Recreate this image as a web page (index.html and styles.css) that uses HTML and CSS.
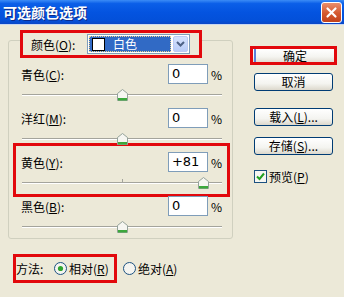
FILE: index.html
```html
<!DOCTYPE html>
<html lang="zh-CN">
<head>
    <meta charset="UTF-8" />
    <title>可选颜色选项</title>
    <link rel="stylesheet" href="styles.css">
</head>
<body>
    <div class="dialog">
        <div class="titlebar">
            <span class="title">可选颜色选项</span>
            <div class="close-btn">
                <svg width="13" height="13" viewBox="0 0 13 13"><path d="M2.5 2.5 L10.5 10.5 M10.5 2.5 L2.5 10.5" stroke="#fff" stroke-width="2.2" stroke-linecap="round"/></svg>
            </div>
        </div>

        <div class="content">
            <div class="left">
                <div class="group">
                    <div class="legend mark">
                        <span class="legend-label">颜色(<u>O</u>):</span>
                        <div class="combo">
                            <div class="combo-value">
                                <span class="swatch"></span>
                                <span>白色</span>
                            </div>
                            <div class="combo-arrow">
                                <svg width="9" height="6" viewBox="0 0 9 6"><path d="M1 1 L4.5 4.5 L8 1" fill="none" stroke="#4d6185" stroke-width="2"/></svg>
                            </div>
                        </div>
                    </div>

                    <div class="row">
                        <div class="line">
                            <span class="row-label">青色(<u>C</u>):</span>
                            <div class="field">0</div>
                            <span class="pct">%</span>
                        </div>
                        <div class="slider">
                            <div class="track"></div>
                            <div class="tick"></div>
                            <svg class="thumb" style="left: 50%;" width="11" height="12" viewBox="0 0 11 12"><path d="M0.5 4.5 L5.5 0.5 L10.5 4.5 V11.5 H0.5 Z" fill="#f6f6f1" stroke="#94a29a"/><rect x="1" y="9" width="9" height="2.5" fill="#3ca83c"/></svg>
                        </div>
                    </div>

                    <div class="row">
                        <div class="line">
                            <span class="row-label">洋红(<u>M</u>):</span>
                            <div class="field">0</div>
                            <span class="pct">%</span>
                        </div>
                        <div class="slider">
                            <div class="track"></div>
                            <div class="tick"></div>
                            <svg class="thumb" style="left: 50%;" width="11" height="12" viewBox="0 0 11 12"><path d="M0.5 4.5 L5.5 0.5 L10.5 4.5 V11.5 H0.5 Z" fill="#f6f6f1" stroke="#94a29a"/><rect x="1" y="9" width="9" height="2.5" fill="#3ca83c"/></svg>
                        </div>
                    </div>

                    <!-- highlighted row -->
                    <div class="row mark">
                        <div class="line">
                            <span class="row-label">黄色(<u>Y</u>):</span>
                            <div class="field">+81</div>
                            <span class="pct">%</span>
                        </div>
                        <div class="slider">
                            <div class="track"></div>
                            <div class="tick"></div>
                            <svg class="thumb" style="left: 90.5%;" width="11" height="12" viewBox="0 0 11 12"><path d="M0.5 4.5 L5.5 0.5 L10.5 4.5 V11.5 H0.5 Z" fill="#f6f6f1" stroke="#94a29a"/><rect x="1" y="9" width="9" height="2.5" fill="#3ca83c"/></svg>
                        </div>
                    </div>

                    <div class="row">
                        <div class="line">
                            <span class="row-label">黑色(<u>B</u>):</span>
                            <div class="field">0</div>
                            <span class="pct">%</span>
                        </div>
                        <div class="slider">
                            <div class="track"></div>
                            <div class="tick"></div>
                            <svg class="thumb" style="left: 50%;" width="11" height="12" viewBox="0 0 11 12"><path d="M0.5 4.5 L5.5 0.5 L10.5 4.5 V11.5 H0.5 Z" fill="#f6f6f1" stroke="#94a29a"/><rect x="1" y="9" width="9" height="2.5" fill="#3ca83c"/></svg>
                        </div>
                    </div>
                </div>

                <div class="method">
                    <div class="method-box mark">
                        <span class="method-label">方法:</span>
                        <span class="opt">
                            <svg width="13" height="13" viewBox="0 0 13 13"><circle cx="6.5" cy="6.5" r="6" fill="#f4f4f0" stroke="#1c5180"/><circle cx="6.5" cy="6.5" r="2.6" fill="#2fa52f"/></svg>
                            <span>相对(<u>R</u>)</span>
                        </span>
                    </div>
                    <span class="opt opt-second">
                        <svg width="13" height="13" viewBox="0 0 13 13"><circle cx="6.5" cy="6.5" r="6" fill="#f4f4f0" stroke="#1c5180"/></svg>
                        <span>绝对(<u>A</u>)</span>
                    </span>
                </div>
            </div>

            <div class="right">
                <div class="btn-default mark">
                    <div class="btn-face">确定</div>
                </div>
                <div class="btn gap-sm">取消</div>
                <div class="btn gap-lg">载入(<u>L</u>)...</div>
                <div class="btn gap-md">存储(<u>S</u>)...</div>
                <div class="check-row">
                    <svg width="13" height="13" viewBox="0 0 13 13"><rect x="0.5" y="0.5" width="12" height="12" fill="#f6f6f2" stroke="#1c5180"/><path d="M3 6.5 L5.5 9 L10 3.5" fill="none" stroke="#21a121" stroke-width="2"/></svg>
                    <span>预览(<u>P</u>)</span>
                </div>
            </div>
        </div>
    </div>
</body>
</html>
```

FILE: styles.css
```css
body {
    margin: 0;
    font-family: "Noto Sans CJK SC", "Liberation Sans", sans-serif;
    font-size: 12px;
    color: #000;
    background-color: #ece9d8;
}

.dialog {
    width: 344px;
    height: 297px;
    background-color: #ece9d8;
}

/* XP title bar */
.titlebar {
    height: 24px;
    display: flex;
    align-items: center;
    justify-content: space-between;
    padding: 0 2px 0 3px;
    background: linear-gradient(#3b8cf6 0%, #0b5fe8 15%, #0454e0 50%, #0350d9 85%, #0a47c6 100%);
    border-bottom: 1px solid #c9d7f0;
}

.title {
    color: #fff;
    font-weight: bold;
    font-size: 14px;
    text-shadow: 1px 1px #0b2a8a;
}

.close-btn {
    width: 21px;
    height: 21px;
    box-sizing: border-box;
    border: 1px solid #fff;
    border-radius: 3px;
    background: linear-gradient(#e98e6c, #d4582f 55%, #c2421b);
    display: flex;
    align-items: center;
    justify-content: center;
}

.content {
    display: flex;
    padding-left: 8px;
}

.left {
    width: 225px;
    padding-top: 15px;
}

/* the red annotation boxes */
.mark {
    border: 3px solid #e2080c !important;
}

.group {
    border: 1px solid #d0d0bf;
    border-radius: 3px;
    padding-bottom: 3px;
}

.legend {
    margin: -11px 0 1px 11px;
    width: 182px;
    height: 28px;
    box-sizing: border-box;
    background-color: #ece9d8;
    display: flex;
    align-items: center;
    padding-left: 8px;
}

.legend-label {
    width: 56px;
    white-space: nowrap;
}

.combo {
    width: 103px;
    height: 20px;
    box-sizing: border-box;
    border: 1px solid #7f9db9;
    background: #fff;
    padding: 1px;
    display: flex;
}

.combo-value {
    flex: 1;
    background-color: #316ac5;
    outline: 1px dotted #e8d090;
    outline-offset: -1px;
    color: #fff;
    display: flex;
    align-items: center;
    gap: 8px;
    padding-left: 3px;
    line-height: 16px;
}

.swatch {
    width: 13px;
    height: 13px;
    background: #fff;
    border: 1px solid #000;
    box-sizing: border-box;
}

.combo-arrow {
    width: 15px;
    margin-left: 2px;
    box-sizing: border-box;
    border: 1px solid #bccbf2;
    border-radius: 2px;
    background: linear-gradient(#d6e2fc, #b9cdf8);
    display: flex;
    align-items: center;
    justify-content: center;
}

/* slider rows */
.row {
    margin: 0 2px 0 4px;
    height: 44px;
    box-sizing: border-box;
    border: 3px solid transparent;
    padding: 2px 5px 0;
}

.row.mark {
    height: 54px;
    margin-top: -4px;
    margin-bottom: -6px;
    padding-top: 6px;
}

.line {
    display: flex;
    align-items: center;
    height: 20px;
}

.row-label {
    flex: 1;
    white-space: nowrap;
}

.field {
    width: 40px;
    height: 20px;
    box-sizing: border-box;
    border: 1px solid #7f9db9;
    background: #fff;
    padding-left: 3px;
    font-family: "DejaVu Sans", sans-serif;
    font-size: 13px;
    line-height: 18px;
}

.pct {
    margin-left: 3px;
}

.slider {
    position: relative;
    height: 16px;
    margin-left: 1px;
}

.track {
    position: relative;
    top: 10px;
    height: 0;
    border-top: 1px solid #a4a49c;
    border-bottom: 1px solid #fff;
}

.tick {
    position: absolute;
    left: 50%;
    top: 7px;
    width: 1px;
    height: 3px;
    background: #a4a49c;
}

.thumb {
    position: absolute;
    top: 5px;
    margin-left: -5px;
}

/* method radios */
.method {
    margin: 15px 0 0 5px;
    display: flex;
    align-items: center;
}

.method-box {
    width: 104px;
    height: 29px;
    box-sizing: border-box;
    display: flex;
    align-items: center;
}

.method-label {
    width: 38px;
}

.opt {
    display: flex;
    align-items: center;
    gap: 2px;
}

.opt-second {
    margin-left: 6px;
}

/* buttons on the right */
.right {
    margin-left: 21px;
    padding-top: 21px;
    width: 79px;
}

.btn {
    width: 79px;
    height: 18px;
    box-sizing: border-box;
    border: 1px solid #003c74;
    border-radius: 3px;
    background: linear-gradient(#ffffff, #f4f4f0 60%, #dcd8cc);
    display: flex;
    align-items: center;
    justify-content: center;
    line-height: 16px;
}

.btn-default {
    margin-left: -4px;
    width: 87px;
    height: 19px;
    box-sizing: border-box;
    background: linear-gradient(#ffffff, #f4f4f0 60%, #e2ded4);
}

.btn-face {
    height: 13px;
    margin-left: 1px;
    border-left: 2px solid #5b7fd8;
    display: flex;
    align-items: center;
    justify-content: center;
    line-height: 13px;
}

.gap-sm {
    margin-top: 8px;
}

.gap-lg {
    margin-top: 17px;
}

.gap-md {
    margin-top: 11px;
}

.check-row {
    margin-top: 15px;
    display: flex;
    align-items: center;
    gap: 2px;
    height: 13px;
    line-height: 13px;
}
```
